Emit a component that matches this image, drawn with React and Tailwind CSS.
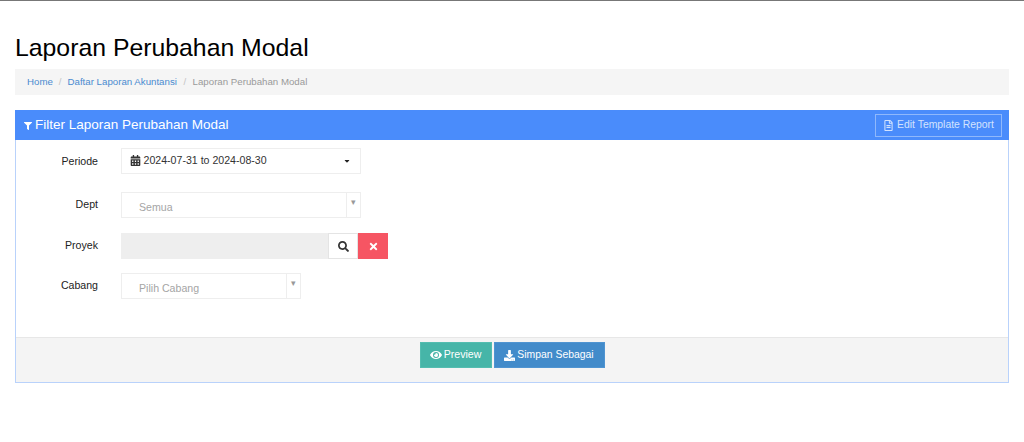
import { FaFilter, FaCalendarAlt, FaCaretDown, FaSearch, FaTimes, FaEye, FaDownload, FaRegFileAlt } from "react-icons/fa";

const FormRow = ({ label, labelClass, children, className }) => {
  return (
    <div className={"flex items-start " + className}>
      <label className={"w-[82px] text-right text-[10.6px] leading-[17px] text-[#222] " + labelClass}>{label}</label>
      <div className="ml-[23px] flex">{children}</div>
    </div>
  );
};

const SelectBox = ({ text, width }) => {
  return (
    <div className={"flex h-[26px] border border-[#eeeeee] bg-white " + width}>
      <div className="flex-1 pl-[17px] pt-[6px] text-[10.6px] leading-[16px] text-[#a5a5a5]">{text}</div>
      <div className="flex w-[14px] justify-center border-l border-[#eeeeee] pt-[3px] text-[9px] leading-[12px] text-[#999]">▾</div>
    </div>
  );
};

const App = () => {
  return (
    <div className="min-h-[442px] border-t border-[#777] bg-white font-['Liberation_Sans',Arial,sans-serif]">
      <div className="px-[15px]">
        <h1 className="mt-[32px] text-[24.8px] leading-[30px] font-normal text-black">Laporan Perubahan Modal</h1>

        <div className="mt-[6px] flex h-[26px] items-center bg-[#f5f5f5] px-[12px] text-[9.7px] text-[#9a9a9a]">
          <span className="text-[#4a8bd0]">Home</span>
          <span className="mx-[6px] text-[#c4c4c4]">/</span>
          <span className="text-[#4a8bd0]">Daftar Laporan Akuntansi</span>
          <span className="mx-[6.5px] text-[#c4c4c4]">/</span>
          <span>Laporan Perubahan Modal</span>
        </div>

        <div className="mt-[15px] border border-[#b9d2fb]">
          <div className="-mx-px -mt-px flex h-[30px] items-center justify-between bg-[#4a8cfb] pl-[8px] pr-[7px] text-white">
            <div className="flex items-center text-[13.5px]">
              <FaFilter className="ml-[0.5px] mr-[3.5px] mt-[2px] text-[8px]" />
              <span>Filter Laporan Perubahan Modal</span>
            </div>
            <button className="flex h-[23px] w-[127px] items-center justify-center border border-[#8fb8fc] text-[10.4px] text-[#d3e3fe]">
              <FaRegFileAlt className="mr-[3px] text-[11px]" />
              Edit Template Report
            </button>
          </div>

          <div className="h-[197px] pt-[8px]">
            <FormRow label="Periode" labelClass="pt-[5px]">
              <div className="flex h-[26px] w-[240px] items-center justify-between border border-[#eeeeee] pl-[8px] pr-[9px] text-[10.6px] text-[#333]">
                <span className="flex items-center">
                  <FaCalendarAlt className="mr-[2.5px] text-[11px] text-[#333]" />
                  2024-07-31 to 2024-08-30
                </span>
                <FaCaretDown className="text-[8px] text-[#222]" />
              </div>
            </FormRow>
            <FormRow label="Dept" labelClass="pt-[4px]" className="mt-[18px]">
              <SelectBox text="Semua" width="w-[240px]" />
            </FormRow>
            <FormRow label="Proyek" labelClass="pt-[4px]" className="mt-[15px]">
              <div className="h-[26px] w-[207px] bg-[#eeeeee]" />
              <div className="flex h-[26px] w-[30px] items-center justify-center border border-[#e4e4e4] text-[11px] text-[#333]">
                <FaSearch />
              </div>
              <div className="flex h-[26px] w-[30px] items-center justify-center bg-[#f65563] text-[11px] text-white">
                <FaTimes />
              </div>
            </FormRow>
            <FormRow label="Cabang" labelClass="pt-[4px]" className="mt-[14px]">
              <SelectBox text="Pilih Cabang" width="w-[180px]" />
            </FormRow>
          </div>

          <div className="flex h-[45px] justify-center gap-[2px] border-t border-[#e7e7e7] bg-[#f4f4f4] pt-[4px]">
            <button className="flex h-[26px] w-[72px] items-center justify-center border border-[#53bdb0] bg-[#46b5a8] text-[10.6px] text-white">
              <FaEye className="mr-[2px] text-[12px]" />
              Preview
            </button>
            <button className="flex h-[26px] w-[111px] items-center justify-center border border-[#4f94d1] bg-[#428bca] text-[10.4px] text-white">
              <FaDownload className="mr-[2px] text-[11px]" />
              Simpan Sebagai
            </button>
          </div>
        </div>
      </div>
    </div>
  );
};

export default App;
